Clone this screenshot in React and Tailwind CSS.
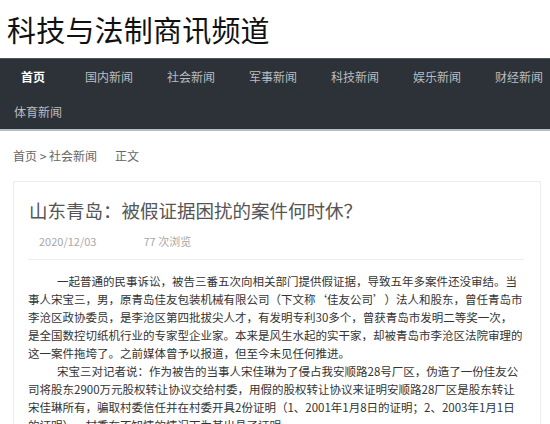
import React from 'react';

const navItems = ['国内新闻', '社会新闻', '军事新闻', '科技新闻', '娱乐新闻', '财经新闻'];

const lines = [
  { text: '一起普通的民事诉讼，被告三番五次向相关部门提供假证据，导致五年多案件还没审结。当', indent: true },
  { text: '事人宋宝三，男，原青岛佳友包装机械有限公司（下文称‘佳友公司’）法人和股东，曾任青岛市' },
  { text: '李沧区政协委员，是李沧区第四批拔尖人才，有发明专利30多个，曾获青岛市发明二等奖一次，' },
  { text: '是全国数控切纸机行业的专家型企业家。本来是风生水起的实干家，却被青岛市李沧区法院审理的' },
  { text: '这一案件拖垮了。之前媒体曾予以报道，但至今未见任何推进。' },
  { text: '宋宝三对记者说：作为被告的当事人宋佳琳为了侵占我安顺路28号厂区，伪造了一份佳友公', indent: true },
  { text: '司将股东2900万元股权转让协议交给村委，用假的股权转让协议来证明安顺路28厂区是股东转让' },
  { text: '宋佳琳所有，骗取村委信任并在村委开具2份证明（1、2001年1月8日的证明；2、2003年1月1日' },
  { text: '的证明），村委在不知情的情况下为其出具了证明。' },
];

export default function App() {
  return (
    <div className="w-[550px] h-[424px] overflow-hidden bg-white [text-spacing-trim:space-all] font-['Noto_Sans_CJK_SC','Microsoft_YaHei',sans-serif]">
      <header className="h-[58px] flex items-center pl-[7px]">
        <h1 className="text-[29px] leading-none text-[#111] tracking-[0.2px]">科技与法制商讯频道</h1>
      </header>

      <nav className="bg-[#2c3238] border-t border-[#50565c] border-b-2 border-b-[#b7bec5] h-[73px]">
        <div className="flex items-center h-[36px] pl-[21px] text-[12px]">
          <a className="text-white font-bold mr-[40px]">首页</a>
          <div className="flex gap-[34px]">
            {navItems.map((item) => (
              <a key={item} className="text-[#b9bdc1]">{item}</a>
            ))}
          </div>
        </div>
        <div className="flex items-center h-[34px] pl-[14px] text-[12px]">
          <a className="text-[#b9bdc1]">体育新闻</a>
        </div>
      </nav>

      <div className="px-[13px]">
        <div className="h-[50px] flex items-center text-[12px] text-[#666]">
          <span>首页 &gt; 社会新闻</span>
          <span className="ml-[18px]">正文</span>
        </div>

        <div className="border border-[#ececec] w-[528px] px-[14px]">
          <h2 className="text-[18.5px] text-[#555] leading-none pt-[19px] pl-[1px]">
            山东青岛：被假证据困扰的案件何时休？
          </h2>
          <div className="flex text-[11px] text-[#a8a8a8] pl-[11px] pt-[13px] pb-[10px]">
            <span>2020/12/03</span>
            <span className="ml-[47px]">77 次浏览</span>
          </div>
          <div className="border-t border-[#ececec] mr-[2px]" />
          <div className="pt-[12px] text-[11.5px] leading-[18px] text-[#333]">
            {lines.map((l, i) => (
              <p key={i} className={l.indent ? 'whitespace-nowrap indent-[29px]' : 'whitespace-nowrap'}>
                {l.text}
              </p>
            ))}
          </div>
        </div>
      </div>
    </div>
  );
}
